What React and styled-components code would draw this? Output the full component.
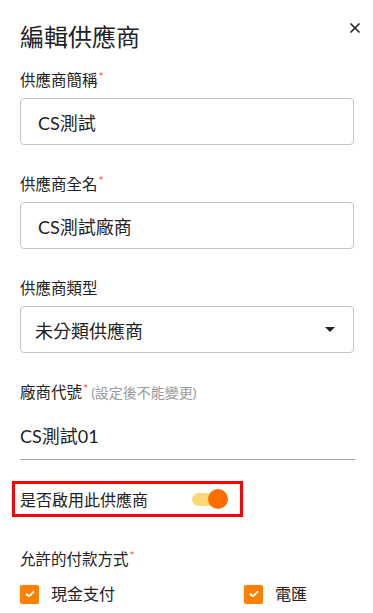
import React from 'react'
import styled, { createGlobalStyle } from 'styled-components'

const GlobalStyle = createGlobalStyle`
  body {
    margin: 0;
    background: #fff;
    font-family: Lato, 'Noto Sans CJK TC', sans-serif;
    color: #222;
  }
`

const Panel = styled.div`
  width: 373px;
  height: 613px;
  box-sizing: border-box;
  padding: 21px 19px 0 20px;
  overflow: hidden;
`

const Header = styled.div`
  display: flex;
  justify-content: space-between;
  align-items: flex-start;
`

const Title = styled.h1`
  margin: 0;
  font-size: 24px;
  line-height: 32px;
  font-weight: 400;
  color: #222;
`

const CloseButton = styled.button`
  border: none;
  background: none;
  padding: 0;
  margin: 1px -7px 0 0;
  width: 12px;
  height: 12px;
  display: flex;
  cursor: pointer;
`

const Field = styled.div`
  margin-top: ${p => p.top || 29}px;
`

const Label = styled.div`
  font-size: 15.5px;
  line-height: 20px;
  color: #222;
`

const Star = styled.span`
  color: #f4511e;
  font-size: 12px;
  vertical-align: top;
  line-height: 14px;
  margin-left: 1px;
`

const Hint = styled.span`
  color: #9a9a9a;
  font-size: 14px;
  margin-left: 3px;
`

const Input = styled.div`
  margin-top: 8px;
  height: 47px;
  box-sizing: border-box;
  border: 1px solid #c4c4c4;
  border-radius: 4px;
  display: flex;
  align-items: center;
  justify-content: space-between;
  padding: 0 18px 0 ${p => p.padLeft || 17}px;
  font-size: 18px;
`

const Arrow = styled.span`
  width: 0;
  height: 0;
  border-left: 5px solid transparent;
  border-right: 5px solid transparent;
  border-top: 5px solid #222;
`

const Underlined = styled.div`
  margin-top: 21px;
  padding-bottom: 11px;
  border-bottom: 1px solid #aaa;
  font-size: 18px;
  line-height: 24px;
  margin-right: -1px;
`

const Highlight = styled.div`
  margin: 21px 0 0 -8px;
  width: 231px;
  height: 36px;
  box-sizing: border-box;
  border: 3px solid #f00;
  display: flex;
  align-items: center;
  padding-left: 5px;
  font-size: 16px;
`

const Switch = styled.span`
  position: relative;
  margin-left: 44px;
  width: 30px;
  height: 13px;
  border-radius: 7px;
  background: #fdd878;
`

const Thumb = styled.span`
  position: absolute;
  right: -6px;
  top: -3.5px;
  width: 20px;
  height: 20px;
  border-radius: 50%;
  background: #ff6d00;
`

const Options = styled.div`
  margin-top: 15px;
  display: grid;
  grid-template-columns: 224px 1fr;
`

const Option = styled.label`
  display: flex;
  align-items: center;
  gap: 12px;
  font-size: 16px;
  line-height: 20px;
`

const Box = styled.span`
  width: 19px;
  height: 19px;
  border-radius: 2px;
  background: #ff7f00;
  display: flex;
  align-items: center;
  justify-content: center;
`

const Check = () => (
  <Box>
    <svg width="10" height="8" viewBox="0 0 10 8">
      <path d="M1.5 4.2 L4 6.3 L8.5 1.8" fill="none" stroke="#fff" strokeWidth="1.8" strokeLinecap="round" strokeLinejoin="round" />
    </svg>
  </Box>
)

const App = () => {
  return (
    <Panel>
      <GlobalStyle />
      <Header>
        <Title>編輯供應商</Title>
        <CloseButton>
          <svg width="12" height="12" viewBox="0 0 12 12">
            <path d="M1.5 1.5 L10.5 10.5 M10.5 1.5 L1.5 10.5" stroke="#222" strokeWidth="1.6" />
          </svg>
        </CloseButton>
      </Header>

      <Field top={17}>
        <Label>供應商簡稱<Star>*</Star></Label>
        <Input>CS測試</Input>
      </Field>

      <Field>
        <Label>供應商全名<Star>*</Star></Label>
        <Input>CS測試廠商</Input>
      </Field>

      <Field>
        <Label>供應商類型</Label>
        <Input padLeft={14}>
          未分類供應商
          <Arrow />
        </Input>
      </Field>

      <Field>
        <Label>廠商代號<Star>*</Star><Hint>(設定後不能變更)</Hint></Label>
        <Underlined>CS測試01</Underlined>
      </Field>

      <Highlight>
        是否啟用此供應商
        <Switch>
          <Thumb />
        </Switch>
      </Highlight>

      <Field top={32}>
        <Label>允許的付款方式<Star>*</Star></Label>
        <Options>
          <Option><Check />現金支付</Option>
          <Option><Check />電匯</Option>
        </Options>
      </Field>
    </Panel>
  )
}

export default App
